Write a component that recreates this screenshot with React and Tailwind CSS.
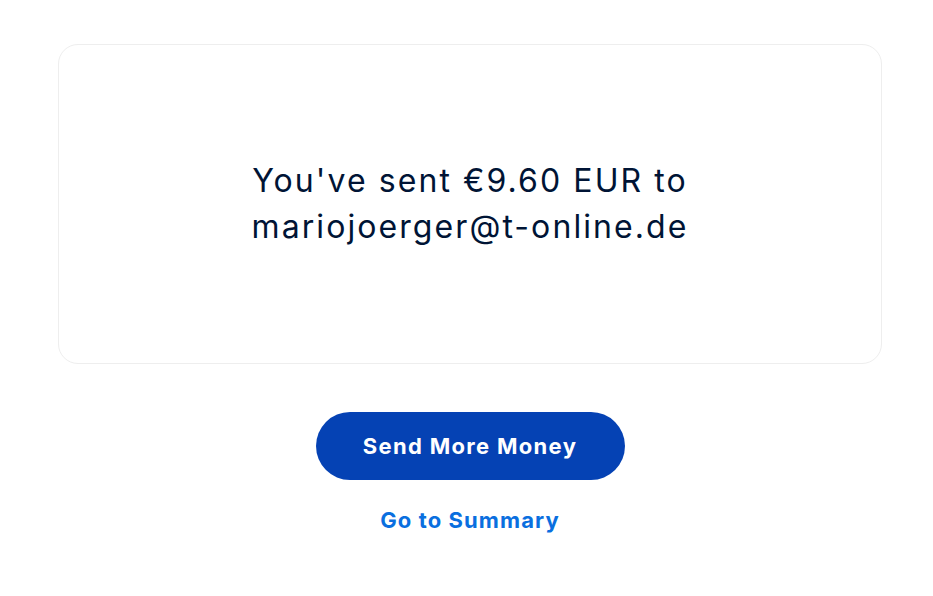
import React from 'react';

const App = () => {
    return (
        <div className="min-h-[596px] bg-white pt-[44px] pl-[58px] pr-[51px]" style={{ fontFamily: 'Inter, "Liberation Sans", sans-serif' }}>
            {/* Confirmation card */}
            <div className="flex h-[320px] items-center justify-center rounded-[20px] border border-[#eeeeee] px-8">
                <p className="text-center text-[32px] leading-[46px] tracking-[0.065em] text-[#001435]">
                    You've sent €9.60 EUR to
                    <br />
                    mariojoerger@t-online.de
                </p>
            </div>

            {/* Actions */}
            <div className="mt-[48px] flex flex-col items-center">
                <button className="flex h-[68px] w-[309px] items-center justify-center rounded-full bg-[#0542b4] text-[22px] font-bold tracking-[0.06em] text-white">
                    Send More Money
                </button>
                <a href="#" className="mt-[24px] text-[22px] font-bold tracking-[0.05em] text-[#0a6fdf]">
                    Go to Summary
                </a>
            </div>
        </div>
    );
};

export default App;
